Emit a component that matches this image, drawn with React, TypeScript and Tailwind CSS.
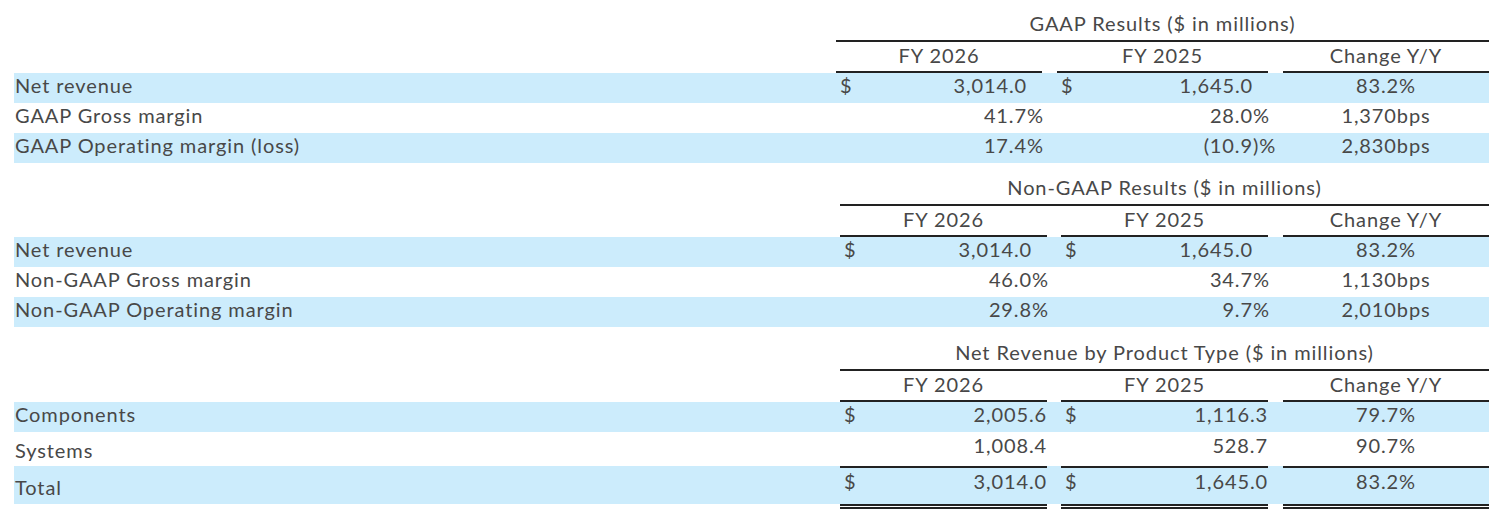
type Cell = { dollar?: boolean; value: string; suffix?: string }

type Row = {
  label: string
  c1: Cell
  c2: Cell
  c3: string
  shaded: boolean
  h: string
  labelPad?: string
  valuePad?: string
  total?: boolean
}

type Section = {
  title: string
  titleH: string
  grid: string
  reserve: boolean
  rows: Row[]
}

const GRID_A = "grid grid-cols-[822px_206px_15px_211px_15px_206px]"
const GRID_B = "grid grid-cols-[826px_207px_14px_207px_15px_206px]"
const LINE = "border-[#222]"
const CENTER = "items-start leading-[25px]"

const sections: Section[] = [
  {
    title: "GAAP Results ($ in millions)",
    titleH: "h-[42px]",
    grid: GRID_A,
    reserve: true,
    rows: [
      {
        label: "Net revenue",
        c1: { dollar: true, value: "3,014.0" },
        c2: { dollar: true, value: "1,645.0" },
        c3: "83.2%",
        shaded: true,
        h: "h-[30px]",
      },
      {
        label: "GAAP Gross margin",
        c1: { value: "41.7", suffix: "%" },
        c2: { value: "28.0", suffix: "%" },
        c3: "1,370bps",
        shaded: false,
        h: "h-[30px]",
      },
      {
        label: "GAAP Operating margin (loss)",
        c1: { value: "17.4", suffix: "%" },
        c2: { value: "(10.9", suffix: ")%" },
        c3: "2,830bps",
        shaded: true,
        h: "h-[30px]",
      },
    ],
  },
  {
    title: "Non-GAAP Results ($ in millions)",
    titleH: "h-[43px]",
    grid: GRID_B,
    reserve: true,
    rows: [
      {
        label: "Net revenue",
        c1: { dollar: true, value: "3,014.0" },
        c2: { dollar: true, value: "1,645.0" },
        c3: "83.2%",
        shaded: true,
        h: "h-[30px]",
      },
      {
        label: "Non-GAAP Gross margin",
        c1: { value: "46.0", suffix: "%" },
        c2: { value: "34.7", suffix: "%" },
        c3: "1,130bps",
        shaded: false,
        h: "h-[30px]",
      },
      {
        label: "Non-GAAP Operating margin",
        c1: { value: "29.8", suffix: "%" },
        c2: { value: "9.7", suffix: "%" },
        c3: "2,010bps",
        shaded: true,
        h: "h-[30px]",
      },
    ],
  },
  {
    title: "Net Revenue by Product Type ($ in millions)",
    titleH: "h-[44px]",
    grid: GRID_B,
    reserve: false,
    rows: [
      {
        label: "Components",
        c1: { dollar: true, value: "2,005.6" },
        c2: { dollar: true, value: "1,116.3" },
        c3: "79.7%",
        shaded: true,
        h: "h-[30px]",
      },
      {
        label: "Systems",
        c1: { value: "1,008.4" },
        c2: { value: "528.7" },
        c3: "90.7%",
        shaded: false,
        h: "h-[34px]",
        labelPad: "pt-[3px]",
        valuePad: "leading-[26px]",
      },
      {
        label: "Total",
        c1: { dollar: true, value: "3,014.0" },
        c2: { dollar: true, value: "1,645.0" },
        c3: "83.2%",
        shaded: true,
        h: "h-[38px]",
        labelPad: "pt-[6px]",
        valuePad: "leading-[26px]",
        total: true,
      },
    ],
  },
]

const ValueCell = ({ cell, reserve, row }: { cell: Cell; reserve: boolean; row: Row }) => (
  <div className={`flex ${row.valuePad ?? CENTER} ${row.total ? `border-t-2 ${LINE}` : ""}`}>
    <span className="pl-[4px] w-[22px]">{cell.dollar ? "$" : ""}</span>
    <span className="flex-1 text-right">{cell.value}</span>
    {reserve && <span className="w-[15px] whitespace-nowrap">{cell.suffix ?? ""}</span>}
  </div>
)

const TableSection = ({ section }: { section: Section }) => (
  <div className="flex flex-col">
    <div className={`${section.grid} ${section.titleH}`}>
      <div />
      <div className={`col-span-5 flex items-end justify-center pb-[2px] border-b-2 ${LINE}`}>
        {section.title}
      </div>
    </div>
    <div className={`${section.grid} h-[31px] leading-[26px]`}>
      <div />
      <div className={`flex items-start justify-center border-b-2 ${LINE}`}>FY 2026</div>
      <div />
      <div className={`flex items-start justify-center border-b-2 ${LINE}`}>FY 2025</div>
      <div />
      <div className={`flex items-start justify-center border-b-2 ${LINE}`}>Change Y/Y</div>
    </div>
    {section.rows.map((row) => (
      <div key={row.label} className={`${section.grid} ${row.h} ${row.shaded ? "bg-[#ccecfc]" : ""}`}>
        <div className={`flex pl-[1px] ${row.labelPad ?? CENTER}`}>{row.label}</div>
        <ValueCell cell={row.c1} reserve={section.reserve} row={row} />
        <div />
        <ValueCell cell={row.c2} reserve={section.reserve} row={row} />
        <div />
        <div className={`flex justify-center ${row.valuePad ?? CENTER} ${row.total ? `border-t-2 ${LINE}` : ""}`}>
          {row.c3}
        </div>
      </div>
    ))}
    {section.rows.some((r) => r.total) && (
      <div className={`${section.grid} h-[5px]`}>
        <div />
        <div className={`border-b-[5px] border-double ${LINE}`} />
        <div />
        <div className={`border-b-[5px] border-double ${LINE}`} />
        <div />
        <div className={`border-b-[5px] border-double ${LINE}`} />
      </div>
    )}
  </div>
)

export default function App() {
  return (
    <div
      className="w-[1501px] h-[516px] bg-white pl-[14px] pr-[12px] text-[20px] leading-[30px] tracking-[0.9px] font-normal text-[#484848] overflow-hidden"
      style={{ fontFamily: "Lato, 'Noto Sans', sans-serif" }}
    >
      {sections.map((s) => (
        <TableSection key={s.title} section={s} />
      ))}
    </div>
  )
}
